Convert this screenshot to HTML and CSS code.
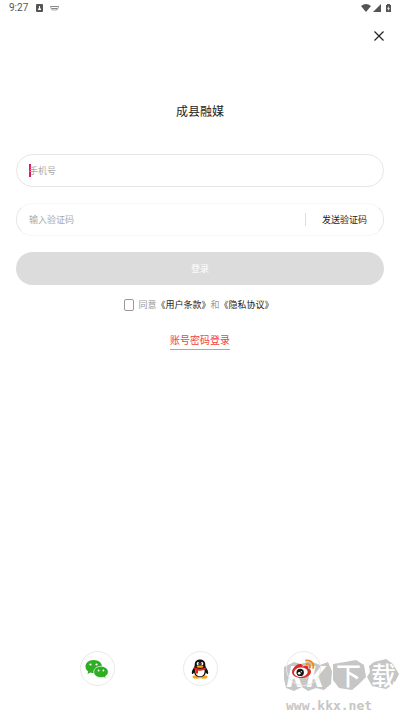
FILE: index.html
```html
<!DOCTYPE html>
<html lang="zh-CN">
<head>
<meta charset="utf-8">
<meta name="viewport" content="width=device-width, initial-scale=1">
<title>成县融媒</title>
<link rel="stylesheet" href="styles.css">
</head>
<body>
<div class="status">
  <span class="time">9:27</span>
  <svg class="app" width="7" height="8" viewBox="0 0 7 8"><rect width="7" height="8" rx="1" fill="#555"/><path d="M2 6V5l1-1V2h1v2l1 1v1z" fill="#fff"/></svg>
  <svg width="9" height="6" viewBox="0 0 9 6"><path d="M0 1.500h9M1 3.500h7" stroke="#888" fill="none"/><path d="M0 1l2 4h5l2-4" stroke="#aaa" fill="none"/></svg>
  <span class="signals">
    <svg width="10" height="8" viewBox="0 0 10 8"><path d="M0 2Q5-2 10 2L5 8z" fill="#555"/></svg>
    <svg width="8" height="8" viewBox="0 0 8 8"><path d="M8 0v8H0z" fill="#555"/></svg>
    <svg class="battery" width="5" height="8" viewBox="0 0 5 8"><path d="M1 0h3v1h1v7H0V1h1z" fill="#555"/><path d="M3 2L1 5h1v2l2-3H3z" fill="#ddd"/></svg>
  </span>
</div>
<header class="top">
  <button class="close" type="button" aria-label="关闭"><svg width="10" height="10" viewBox="0 0 10 10"><path d="M.5.5l9 9M9.500.5l-9 9" stroke="#222" stroke-width="1.200" fill="none"/></svg></button>
</header>
<main>
  <h1>成县融媒</h1>
  <form>
    <div class="field active">
      <span class="caret"></span>
      <input type="tel" placeholder="手机号" aria-label="手机号">
    </div>
    <div class="field code">
      <input type="text" placeholder="输入验证码" aria-label="输入验证码">
      <button class="send" type="button">发送验证码</button>
    </div>
    <button class="login" type="submit">登录</button>
    <div class="agree">
      <input type="checkbox" id="agree"><label for="agree">同意</label><a href="#">《用户条款》</a><span>和</span><a href="#">《隐私协议》</a>
    </div>
  </form>
  <a class="switch" href="#">账号密码登录</a>
</main>
<footer class="social">
  <button type="button" aria-label="微信">
    <svg width="24" height="20" viewBox="0 0 24 20"><path d="M8.500 1C3.500 1 .5 4 .5 7.500c0 2 1 3.700 2.700 5L2.500 15l3-1.500c1 .4 2 .5 3 .5 5 0 8.500-2.800 8.500-6.500S13.500 1 8.500 1z" fill="#2fad25"/><path d="M16 7.300c-4 0-7.300 2.500-7.300 5.700s3.300 5.700 7.300 5.700c1 0 1.800-.1 2.600-.4L21 19.500l-.6-2.300c1.800-1 2.900-2.500 2.900-4.200 0-3.200-3.300-5.700-7.300-5.700z" fill="#2fad25" stroke="#fff" stroke-width=".7"/><g fill="#fff"><circle cx="5.500" cy="5.500" r="1.100"/><circle cx="11.500" cy="5.500" r="1.100"/><circle cx="13.600" cy="11.500" r=".9"/><circle cx="18.400" cy="11.500" r=".9"/></g></svg>
  </button>
  <button type="button" aria-label="QQ">
    <svg width="18" height="20" viewBox="0 0 18 20"><ellipse cx="5.500" cy="18" rx="4" ry="1.700" fill="#f7a51b"/><ellipse cx="12.500" cy="18" rx="4" ry="1.700" fill="#f7a51b"/><path d="M9 .5c-3.800 0-5.500 2.500-5.300 6C3.700 8 1 10.500.8 13c-.1 1.500.5 2.300 1 2 .5-.2 1-1 1.300-1.500C3.600 16.500 6 18 9 18s5.400-1.500 5.900-4.500c.3.500.8 1.300 1.300 1.500.5.300 1.100-.5 1-2-.2-2.500-2.900-5-2.900-6.500.2-3.500-1.500-6-5.300-6z" fill="#111"/><path d="M4.700 10h8.600c1 4-.7 7.300-4.300 7.300S3.700 14 4.700 10z" fill="#fff"/><ellipse cx="7" cy="4.700" rx="1.300" ry="1.700" fill="#fff"/><ellipse cx="11" cy="4.700" rx="1.300" ry="1.700" fill="#fff"/><circle cx="7.400" cy="4.900" r=".6"/><circle cx="10.600" cy="4.900" r=".6"/><ellipse cx="9" cy="7.700" rx="3.300" ry="1.100" fill="#f7a51b"/><path d="M3.300 8.300Q9 11 14.700 8.300l.3 2Q11 12.200 7 11.500v3H4.500l.3-3.700-1.800-.7z" fill="#e1251b"/></svg>
  </button>
  <button type="button" aria-label="微博">
    <svg width="24" height="20" viewBox="0 0 24 20"><path d="M9 5C6 4.500 1 9.500 1 13c0 3.700 4.300 6 9 6 6 0 10-3.200 10-6.300 0-1.900-1.400-2.900-3-3.300.8-2.600-1-3.600-5.500-1.900C12.200 5.700 10.500 4.700 9 5z" fill="#dc2c25"/><ellipse cx="9.800" cy="13.200" rx="6.900" ry="4.700" fill="#fff" transform="rotate(-6 9.800 13.200)"/><circle cx="9.200" cy="13.400" r="3.700" fill="#161616"/><circle cx="8.200" cy="14.200" r="1.300" fill="#fff"/><circle cx="10.300" cy="12.700" r=".6" fill="#fff"/><path d="M15 1.500c4.500-1 8.500 3 7 7.500M15.500 5c2.300-.5 4 1.300 3.300 3.500" fill="none" stroke="#ef8a1d" stroke-width="1.800" stroke-linecap="round"/></svg>
  </button>
</footer>
<div class="mark">
  <svg width="116" height="34" viewBox="0 0 116 34">
    <path d="M1 9l10-5 7 2 9-3 10 4 8-3 4 9-1 13-7 6-8-2-8 3-6-4-8 4-8-3-2-9zM50 6l12-2 11-2 8 5 2 12-8 8-6 5-13-2-6-8zM86 8l5-4 12-3 7 5 6 10-5 10-8 5-14-3-5-9 3-5z" fill="#c6c6c6"/>
    <g class="brush"><text class="latin" x="3" y="29">K</text><text class="latin" x="23" y="29">K</text><text x="53" y="27">下</text><text x="88" y="27">载</text></g>
  </svg>
  <span>www.kkx.net</span>
</div>
</body>
</html>
```
FILE: styles.css
```css
* { box-sizing: border-box; }
body {
  margin: 0;
  min-height: 100vh;
  position: relative;
  display: flex;
  flex-direction: column;
  background: #fff;
  color: #222;
  font: 9px/16px Roboto, "Noto Sans CJK SC", sans-serif;
}
button { font: inherit; border: 0; padding: 0; background: none; color: inherit; }
a { color: inherit; text-decoration: none; }
svg { display: block; }
.status {
  display: flex;
  align-items: center;
  height: 16px;
  padding: 0 9px;
  color: #555;
}
.time { font-size: 10px; }
.app { margin: 0 7px 0 8px; }
.signals { display: flex; gap: 2px; margin-left: auto; }
.battery { margin-left: 3px; }
.top { display: flex; justify-content: flex-end; padding: 12px 16px; }
.close { display: grid; place-items: center; height: 16px; }
main {
  display: flex;
  flex-direction: column;
  align-items: center;
  padding: 46px 16px 0;
}
h1 { margin: 0; font-size: 12px; line-height: 20px; font-weight: 400; }
form { display: flex; flex-direction: column; gap: 16px; width: 100%; margin-top: 32px; }
.field {
  display: flex;
  align-items: center;
  height: 33px;
  padding: 0 16px 0 12px;
  border: 1px solid #e6e6e6;
  border-radius: 17px;
}
.field input {
  flex: 1;
  min-width: 0;
  padding: 0;
  border: 0;
  outline: 0;
  background: none;
  font: inherit;
}
.field input::placeholder { color: #aaa; opacity: 1; }
.caret { width: 2px; height: 13px; margin-right: -2px; background: #d81b60; }
.code { border-top-color: #f6f6f6; border-bottom-color: #f6f6f6; }
.send { height: 13px; padding-left: 16px; border-left: 1px solid #ddd; line-height: 14px; }
.login { height: 33px; border-radius: 17px; background: #dcdcdc; color: #fff; }
.agree {
  display: flex;
  justify-content: center;
  align-items: center;
  height: 18px;
  margin-top: -5px;
  padding-right: 2px;
  color: #999;
}
.agree input {
  appearance: none;
  width: 10px;
  height: 12px;
  margin: 0 4px 0 0;
  border: 1px solid #999;
  border-radius: 2px;
}
.agree a { color: #222; }
.switch {
  margin-top: 18px;
  border-bottom: 1px solid #f58a84;
  color: #f0433a;
  font-size: 10px;
  line-height: 17px;
}
.social {
  position: relative;
  z-index: 1;
  display: flex;
  justify-content: center;
  gap: 68px;
  margin-top: auto;
  padding-bottom: 26px;
}
.social button {
  display: grid;
  place-items: center;
  width: 35px;
  height: 35px;
  border: 1px solid #e9e9e9;
  border-radius: 50%;
}
.mark {
  position: absolute;
  right: 1px;
  bottom: 0;
  color: #c6c6c6;
  font: bold 13px/12px "DejaVu Sans Mono", monospace;
}
.mark svg { margin-bottom: 8px; overflow: visible; }
.mark span { display: block; padding-left: 3px; }
.brush { fill: #fff; font: 500 25px "Noto Sans CJK SC", sans-serif; }
.latin { font: italic bold 29px "Open Sans", sans-serif; }
```
